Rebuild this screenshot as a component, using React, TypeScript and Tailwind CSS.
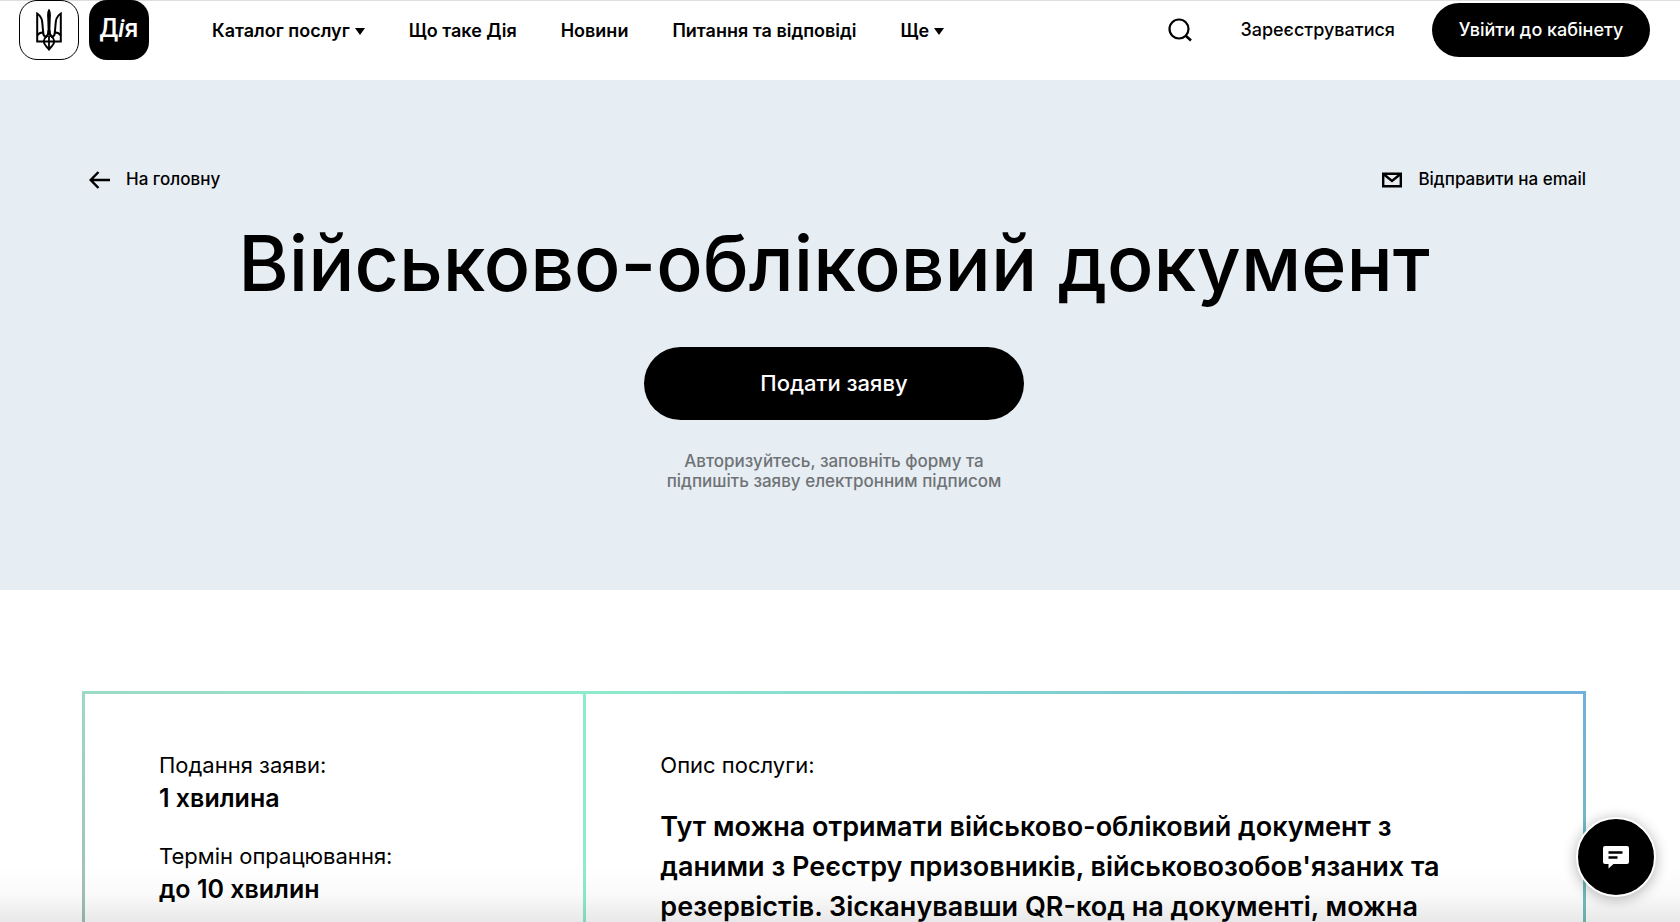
import type { ReactNode } from 'react';

interface NavItem {
  label: string;
  hasMenu?: boolean;
}

const NAV_ITEMS: NavItem[] = [
  { label: 'Каталог послуг', hasMenu: true },
  { label: 'Що таке Дія' },
  { label: 'Новини' },
  { label: 'Питання та відповіді' },
  { label: 'Ще', hasMenu: true },
];

const TERMS = [
  { label: 'Подання заяви:', value: '1 хвилина' },
  { label: 'Термін опрацювання:', value: 'до 10 хвилин' },
];

function TridentIcon() {
  return (
    <svg
      viewBox="0 0 26 42"
      className="h-[42px] w-[26px]"
      fill="none"
      stroke="currentColor"
      strokeWidth="2"
      strokeLinejoin="miter"
      aria-hidden="true"
    >
      <path d="M8 32.500H1.200V4.500C5 7 6.500 11 6.500 16l.6 7" />
      <path d="M18 32.500h6.800V4.500C21 7 19.500 11 19.500 16l-.6 7" />
      <path d="M1.200 26.500c1.500-2.300 3.500-3.200 6-3 0 2.500 1 4 2.800 4.500 1.600-1.500 2.500-4 2.600-7" />
      <path d="M24.800 26.500c-1.500-2.300-3.500-3.200-6-3 0 2.500-1 4-2.800 4.500-1.600-1.500-2.500-4-2.600-7" />
      <path d="M13 1c-1.300 2-1.300 5-1 8l.4 13h1.200L14 9c.3-3 .3-6-1-8z" fill="currentColor" strokeWidth="1.500" />
      <path d="M10 28c-1.500 1-2.200 2.500-2.200 4.500 0 3.500 3 5 5.200 8 2.200-3 5.200-4.500 5.200-8 0-2-.7-3.500-2.200-4.500-1-.8-2.200-2-3-4-.8 2-2 3.200-3 4z" />
      <path d="M13 27v13M8 32.500h10" strokeWidth="1.800" />
    </svg>
  );
}

function SearchIcon() {
  return (
    <svg viewBox="0 0 24 24" className="size-6" fill="none" stroke="currentColor" strokeWidth="2.200" aria-hidden="true">
      <circle cx="11" cy="11" r="9.500" />
      <path d="M17.500 17.500l5.500 5" strokeWidth="2.600" />
    </svg>
  );
}

function ArrowLeftIcon() {
  return (
    <svg viewBox="0 0 22 18" className="h-[18px] w-[22px]" fill="none" stroke="currentColor" strokeWidth="2.500" aria-hidden="true">
      <path d="M21 9H2M9.500 1L1.700 9l7.800 8" />
    </svg>
  );
}

function MailIcon() {
  return (
    <svg viewBox="0 0 20 16" className="h-4 w-5" fill="none" stroke="currentColor" strokeWidth="2.400" aria-hidden="true">
      <path d="M1.200 1.700h17.600v12.600H1.200z" />
      <path d="M2 2.500l8 6.500 8-6.500" />
    </svg>
  );
}

function ChatIcon() {
  return (
    <svg viewBox="0 0 26 23" className="h-[23px] w-[26px]" aria-hidden="true">
      <path d="M2 0h22a2 2 0 0 1 2 2v14a2 2 0 0 1-2 2H10.500l-5 4.500V18H2a2 2 0 0 1-2-2V2a2 2 0 0 1 2-2z" fill="#fff" />
      <path d="M5.500 6.500h14M5.500 11.500h9" stroke="#000" strokeWidth="2.400" />
    </svg>
  );
}

function Caret() {
  return (
    <svg viewBox="0 0 10 7" className="h-[7px] w-[10px]" aria-hidden="true">
      <path d="M0 0h10L5 7z" fill="currentColor" />
    </svg>
  );
}

function CardColumn({ children }: { children: ReactNode }) {
  return <div className="bg-white px-[74px] pt-[55px]">{children}</div>;
}

export default function App() {
  return (
    <div className="relative flex h-screen flex-col overflow-hidden bg-white font-['Inter','Noto_Sans',sans-serif] text-black">
      <header className="flex h-20 shrink-0 items-start border-t border-[#dedede] pr-[30px] pl-[19px]">
        <div className="-mt-px flex gap-[10px]">
          <a href="#gov" aria-label="Герб України" className="flex size-[60px] items-center justify-center rounded-[18px] border border-black">
            <TridentIcon />
          </a>
          <a
            href="#diia"
            className="flex size-[60px] items-center justify-center rounded-[18px] bg-black pb-0.5 font-['Roboto',sans-serif] text-[25px] font-medium text-white"
          >
            <span>
              Д<i>і</i>я
            </span>
          </a>
        </div>
        <nav className="ml-[63px] flex h-[60px] items-center gap-11 text-lg font-semibold whitespace-nowrap">
          {NAV_ITEMS.map((item) =>
            item.hasMenu ? (
              <button key={item.label} type="button" className="flex items-center gap-[5px]">
                {item.label}
                <Caret />
              </button>
            ) : (
              <a key={item.label} href="#nav">
                {item.label}
              </a>
            ),
          )}
        </nav>
        <div className="ml-auto flex h-[58px] items-center text-lg font-medium whitespace-nowrap">
          <button type="button" aria-label="Пошук" className="mr-12">
            <SearchIcon />
          </button>
          <a href="#register" className="mr-[37px]">
            Зареєструватися
          </a>
          <button type="button" className="h-[54px] w-[218px] rounded-full bg-black text-white">
            Увійти до кабінету
          </button>
        </div>
      </header>

      <section className="flex h-[510px] shrink-0 flex-col items-center bg-[#e6edf3] pr-[94px] pl-[82px]">
        <div className="mt-[88px] flex h-6 w-full items-center justify-between pl-[7px] text-[17px] font-medium">
          <a href="#home" className="flex items-center gap-[15px]">
            <ArrowLeftIcon />
            На головну
          </a>
          <button type="button" className="flex items-center gap-4">
            <MailIcon />
            Відправити на email
          </button>
        </div>
        <h1 className="mt-[26px] text-[77px] leading-[90px] font-medium whitespace-nowrap">Військово-обліковий документ</h1>
        <button type="button" className="mt-[39px] h-[73px] w-[380px] rounded-full bg-black text-[22px] font-medium text-white">
          Подати заяву
        </button>
        <p className="mt-[31px] text-center text-[17px] leading-5 font-medium text-[#6f7376]">
          Авторизуйтесь, заповніть форму та
          <br />
          підпишіть заяву електронним підписом
        </p>
      </section>

      <section className="mt-[101px] mr-[94px] ml-[82px] grid grow grid-cols-[1fr_2fr] gap-[3px] px-[3px] pt-[3px] [background:linear-gradient(#6fb1da,#72c0b8)_100%_0/3px_100%_no-repeat,linear-gradient(#9cdac3,#a2bdb4)_0_0/3px_100%_no-repeat,linear-gradient(90deg,#9cdac3,#8eebcb_33%,#6fb1da)]">
        <CardColumn>
          <dl>
            {TERMS.map((term) => (
              <div key={term.label} className="mb-[25px]">
                <dt className="text-[22px] leading-[33px]">{term.label}</dt>
                <dd className="text-[25px] leading-[33px] font-semibold">{term.value}</dd>
              </div>
            ))}
          </dl>
        </CardColumn>
        <CardColumn>
          <h2 className="text-[22px] leading-[33px]">Опис послуги:</h2>
          <p className="mt-[25px] text-[27px] leading-10 font-semibold whitespace-nowrap">
            Тут можна отримати військово-обліковий документ з
            <br />
            даними з Реєстру призовників, військовозобов&apos;язаних та
            <br />
            резервістів. Зісканувавши QR-код на документі, можна
          </p>
        </CardColumn>
      </section>

      <div className="pointer-events-none absolute inset-x-0 bottom-0 h-14 bg-linear-to-b from-transparent via-black/2 to-black/9" />
      <button
        type="button"
        aria-label="Чат підтримки"
        className="absolute right-[24px] bottom-[25px] flex size-20 items-center justify-center rounded-full border-2 border-white bg-black shadow-[0_2px_14px_rgba(0,0,0,0.300)]"
      >
        <ChatIcon />
      </button>
    </div>
  );
}
